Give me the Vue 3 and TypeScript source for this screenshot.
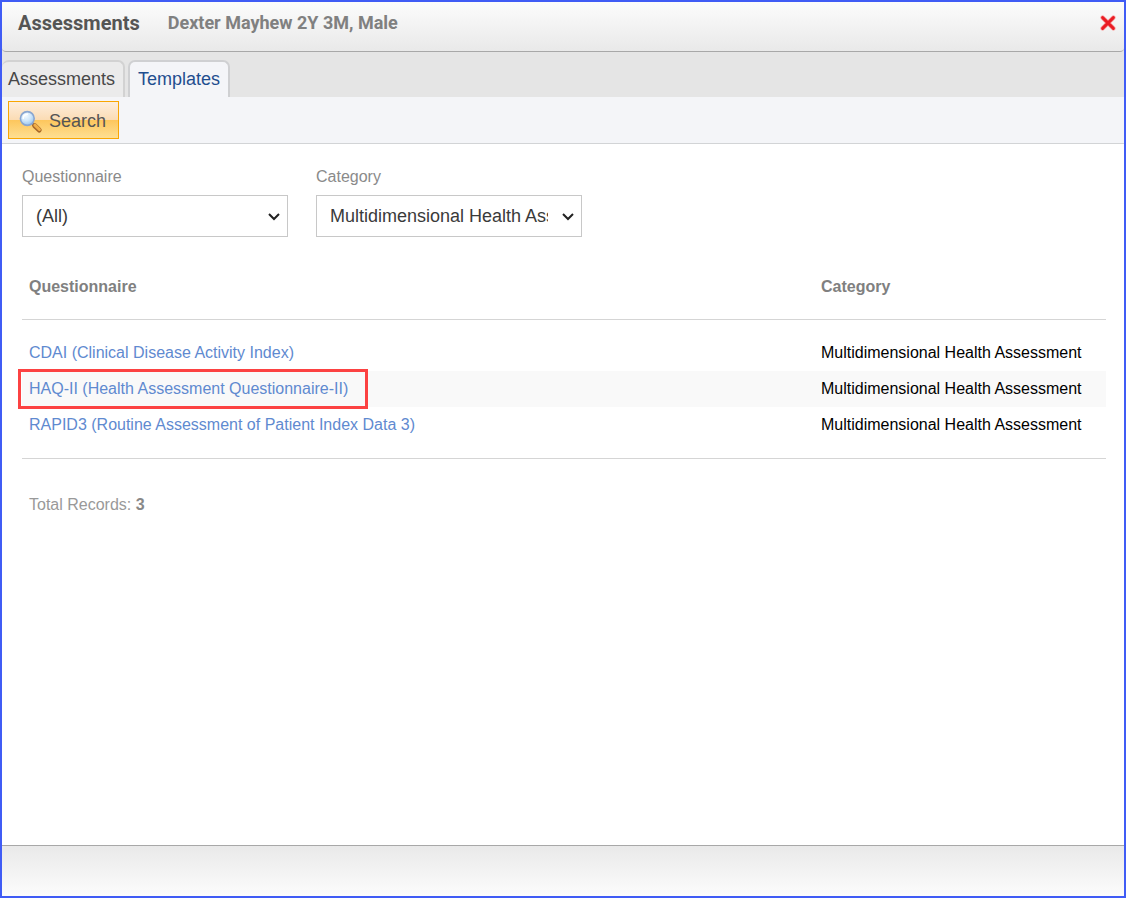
<script setup lang="ts">
import { ref } from 'vue'

interface Template {
  name: string
  category: string
  highlighted?: boolean
}

const tabs: string[] = ['Assessments', 'Templates']
const activeTab = ref('Templates')
const questionnaire = ref('(All)')
const category = ref('Multidimensional Health Assessment')

const templates: Template[] = [
  { name: 'CDAI (Clinical Disease Activity Index)', category: 'Multidimensional Health Assessment' },
  { name: 'HAQ-II (Health Assessment Questionnaire-II)', category: 'Multidimensional Health Assessment', highlighted: true },
  { name: 'RAPID3 (Routine Assessment of Patient Index Data 3)', category: 'Multidimensional Health Assessment' },
]
</script>

<template>
  <div class="dialog">
    <header class="titlebar">
      <h1>Assessments</h1>
      <span class="patient">Dexter Mayhew 2Y 3M, Male</span>
      <button class="close" type="button" aria-label="Close">
        <svg width="16" height="16" viewBox="0 0 16 16" aria-hidden="true">
          <path d="M2.6 2.6 13.4 13.4M13.4 2.6 2.6 13.4" fill="none" stroke="#f7a6a6" stroke-width="4.4" stroke-linecap="round" />
          <path d="M2.6 2.6 13.4 13.4M13.4 2.6 2.6 13.4" fill="none" stroke="#ea1c24" stroke-width="2.9" stroke-linecap="round" />
        </svg>
      </button>
    </header>

    <nav class="tabs">
      <button
        v-for="tab in tabs"
        :key="tab"
        type="button"
        class="tab"
        :class="{ active: tab === activeTab }"
        @click="activeTab = tab"
      >{{ tab }}</button>
    </nav>

    <div class="toolbar">
      <button class="search" type="button">
        <svg width="24" height="24" viewBox="0 0 24 24" aria-hidden="true">
          <defs>
            <radialGradient id="lens" cx="0.4" cy="0.3" r="0.75">
              <stop offset="0" stop-color="#f4fbff" />
              <stop offset="0.5" stop-color="#cfe6fa" />
              <stop offset="1" stop-color="#8fc0ee" />
            </radialGradient>
            <linearGradient id="handle" x1="0" y1="1" x2="1" y2="0">
              <stop offset="0" stop-color="#a8651c" />
              <stop offset="0.5" stop-color="#eda53c" />
              <stop offset="1" stop-color="#b9772a" />
            </linearGradient>
          </defs>
          <path d="M13.2 13.2 16 16" stroke="#8b8f98" stroke-width="2.6" />
          <path d="M15.6 15.6 20.2 20" stroke="#a7682a" stroke-width="5" stroke-linecap="round" />
          <path d="M15.9 15.2 20.4 19.5" stroke="#f0ae48" stroke-width="3" stroke-linecap="round" />
          <circle cx="8.3" cy="8.5" r="6.9" fill="url(#lens)" stroke="#8aa6d0" stroke-width="1.6" />
          <path d="M4.2 8.4a4.4 4.4 0 0 1 4.2-4.2" fill="none" stroke="#fff" stroke-width="1.5" stroke-linecap="round" />
        </svg>
        <span>Search</span>
      </button>
    </div>

    <main class="content">
      <form class="filters" @submit.prevent>
        <div class="field">
          <label for="questionnaire">Questionnaire</label>
          <div class="picker">
            <select id="questionnaire" v-model="questionnaire">
              <option>(All)</option>
            </select>
            <svg class="chevron" width="14" height="10" viewBox="0 0 14 10" aria-hidden="true">
              <path d="m2 2 5 5 5-5" fill="none" stroke="#222" stroke-width="2" />
            </svg>
          </div>
        </div>
        <div class="field">
          <label for="category">Category</label>
          <div class="picker">
            <select id="category" v-model="category">
              <option>Multidimensional Health Assessment</option>
            </select>
            <svg class="chevron" width="14" height="10" viewBox="0 0 14 10" aria-hidden="true">
              <path d="m2 2 5 5 5-5" fill="none" stroke="#222" stroke-width="2" />
            </svg>
          </div>
        </div>
      </form>

      <div class="results">
        <table>
          <thead>
            <tr>
              <th scope="col">Questionnaire</th>
              <th scope="col" class="category">Category</th>
            </tr>
          </thead>
          <tbody>
            <tr v-for="item in templates" :key="item.name">
              <td><a href="#" :class="{ highlighted: item.highlighted }">{{ item.name }}</a></td>
              <td>{{ item.category }}</td>
            </tr>
          </tbody>
        </table>
      </div>

      <p class="total">Total Records: <strong>{{ templates.length }}</strong></p>
    </main>

    <footer class="footer"></footer>
  </div>
</template>

<style>
body {
  margin: 0;
}
</style>

<style scoped>
.dialog {
  box-sizing: border-box;
  display: flex;
  flex-direction: column;
  min-height: 100vh;
  border: 2px solid #405cf5;
  background: #fff;
  font-family: "Liberation Sans", Arial, sans-serif;
  font-size: 16px;
  line-height: 20px;
}

button,
select {
  font-family: inherit;
}

.titlebar {
  display: flex;
  align-items: center;
  box-sizing: border-box;
  height: 50px;
  padding: 0 8px 8px 16px;
  border-bottom: 1px solid #a8a8a8;
  border-radius: 0 0 4px 4px;
  background: linear-gradient(#fcfcfc, #e9e9e9);
  box-shadow: 0 4px 0 #e5e5e5;
  font-family: Roboto, sans-serif;
}

h1 {
  margin: 0 28px 0 0;
  color: #555;
  font-size: 20px;
  font-weight: 700;
  line-height: 24px;
}

.patient {
  color: #808080;
  font-size: 18px;
  font-weight: 700;
  line-height: 26px;
}

.close {
  display: flex;
  margin-left: auto;
  padding: 0;
  border: 0;
  background: none;
}

.tabs {
  display: flex;
  align-items: flex-end;
  gap: 3px;
  height: 45px;
  background: #e5e5e5;
}

.tab {
  box-sizing: border-box;
  height: 37px;
  padding: 0 8px 2px;
  border: 2px solid #d2d2d2;
  border-bottom: 0;
  border-radius: 7px 7px 0 0;
  background: #ebebeb;
  color: #484848;
  font-size: 18px;
  line-height: 22px;
}

.tab:first-child {
  padding-left: 6px;
  border-left-width: 0;
}

.tab.active {
  border-color: #cfd0d2;
  background: #f4f5f8;
  color: #1f4e8f;
}

.toolbar {
  display: flex;
  padding: 4px 6px;
  border-bottom: 1px solid #d2d4d6;
  background: #f4f5f8;
}

.search {
  display: flex;
  align-items: center;
  gap: 6px;
  box-sizing: border-box;
  height: 38px;
  padding: 3px 12px 0 10px;
  border: 1px solid #f9a602;
  background: linear-gradient(#fdeede, #fbdcb4 49%, #fdc65c 50%, #fedf92);
  color: #555;
  font-size: 18px;
}

.content {
  flex: 1;
  padding: 23px 18px 0 20px;
}

.filters {
  display: flex;
  gap: 28px;
}

.field {
  display: flex;
  flex-direction: column;
  gap: 8px;
}

label {
  color: #8a8a8a;
}

.picker {
  position: relative;
}

select {
  appearance: none;
  box-sizing: border-box;
  width: 266px;
  height: 42px;
  padding: 0 33px 0 13px;
  border: 1px solid #c8c8c8;
  border-radius: 0;
  background: #fff;
  color: #3a3a3a;
  font-size: 18px;
}

.chevron {
  position: absolute;
  top: 17px;
  right: 7px;
  pointer-events: none;
}

.results {
  margin-top: 35px;
  padding-bottom: 15px;
  border-bottom: 1px solid #d5d5d5;
}

table {
  width: 100%;
  border-collapse: separate;
  border-spacing: 0;
  table-layout: fixed;
}

th,
td {
  height: 36px;
  padding: 0 7px;
  text-align: left;
}

th {
  height: 47px;
  border-bottom: 1px solid #d5d5d5;
  color: #808080;
  line-height: 30px;
  vertical-align: top;
}

th.category {
  width: 278px;
}

tbody::before {
  display: table-row;
  height: 15px;
  content: "";
}

tbody tr:nth-child(even) {
  background: #f9f9f9;
}

td {
  color: #000;
}

a {
  color: #5f8ad0;
  text-decoration: none;
}

a.highlighted {
  display: inline-block;
  padding-right: 9px;
  outline: 3px solid #fc4242;
  outline-offset: 8px;
  line-height: 18px;
}

.total {
  margin: 36px 7px 0;
  color: #999;
}

.total strong {
  color: #888;
}

.footer {
  height: 50px;
  border-top: 1px solid #a8a8a8;
  background: linear-gradient(#e9e9e9, #fcfcfc);
}
</style>
